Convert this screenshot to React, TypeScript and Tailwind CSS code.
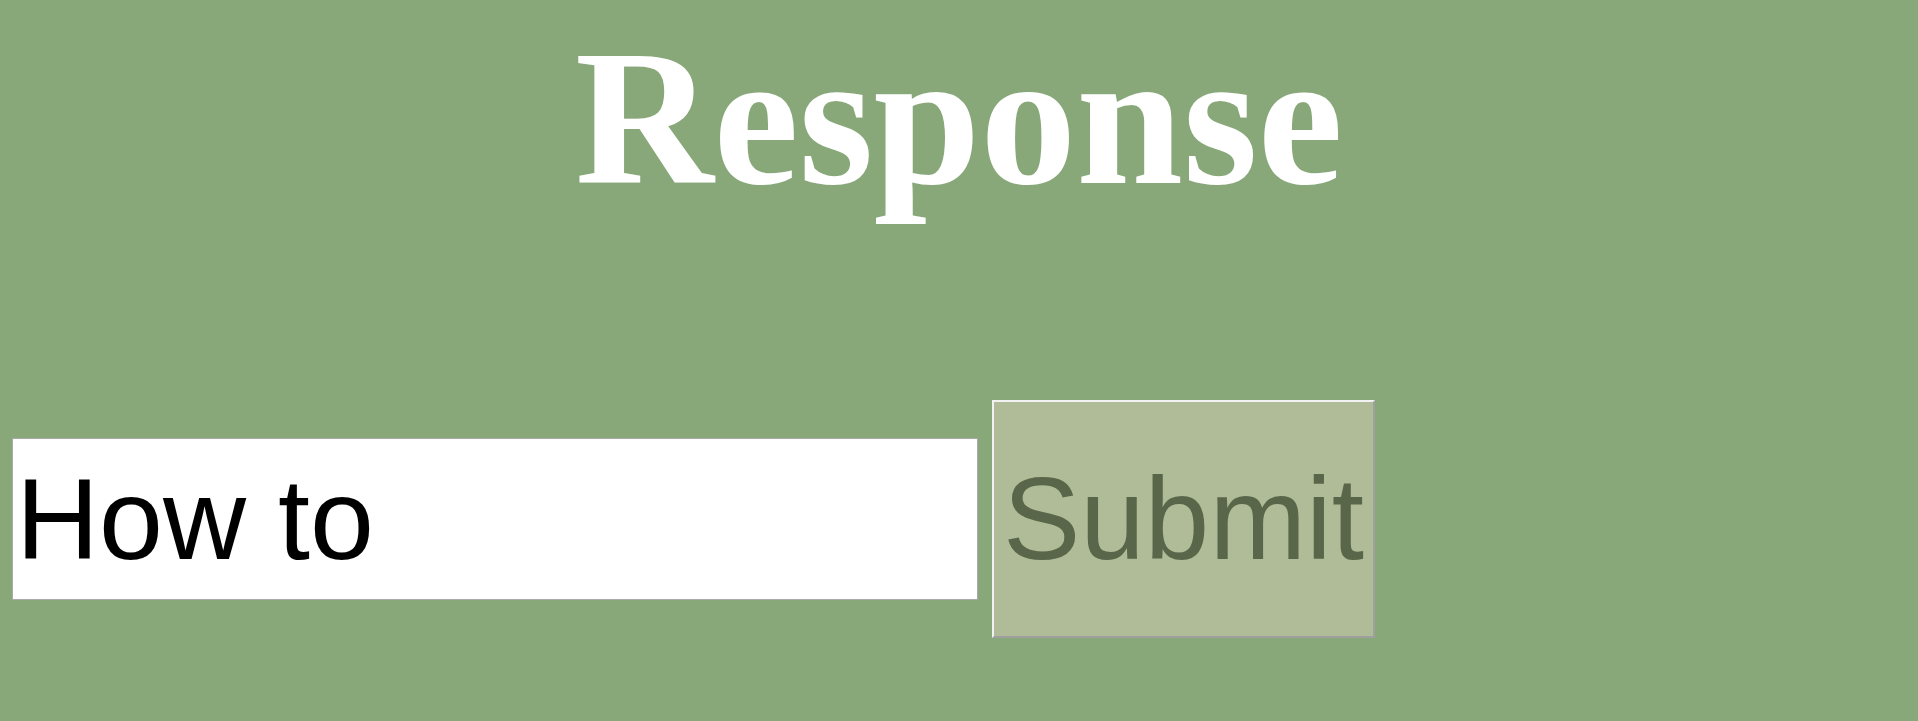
import React from "react";

export default function App() {
  return (
    <div className="w-[1918px] h-[721px] bg-[#88a87a] overflow-hidden">
      <h1 className="pt-[23px] text-center text-white font-bold text-[192px] leading-none font-['Liberation_Serif','Times_New_Roman',serif]">
        Response
      </h1>
      <div className="mt-[185px] flex items-center pl-[12px] gap-[14px]">
        <input
          type="text"
          defaultValue="How to"
          className="w-[966px] h-[162px] bg-white border border-[#a9a9a9] px-[3px] text-black text-[115px] outline-none font-['Liberation_Sans',Arial,sans-serif]"
        />
        <button className="w-[383px] h-[238px] bg-[#b0bc98] border-2 border-t-[#f2f2f2] border-l-[#f2f2f2] border-r-[#a0a0a0] border-b-[#a0a0a0] text-[#5a6649] text-[116px] leading-none flex items-center justify-center font-['Liberation_Sans',Arial,sans-serif]">
          Submit
        </button>
      </div>
    </div>
  );
}
